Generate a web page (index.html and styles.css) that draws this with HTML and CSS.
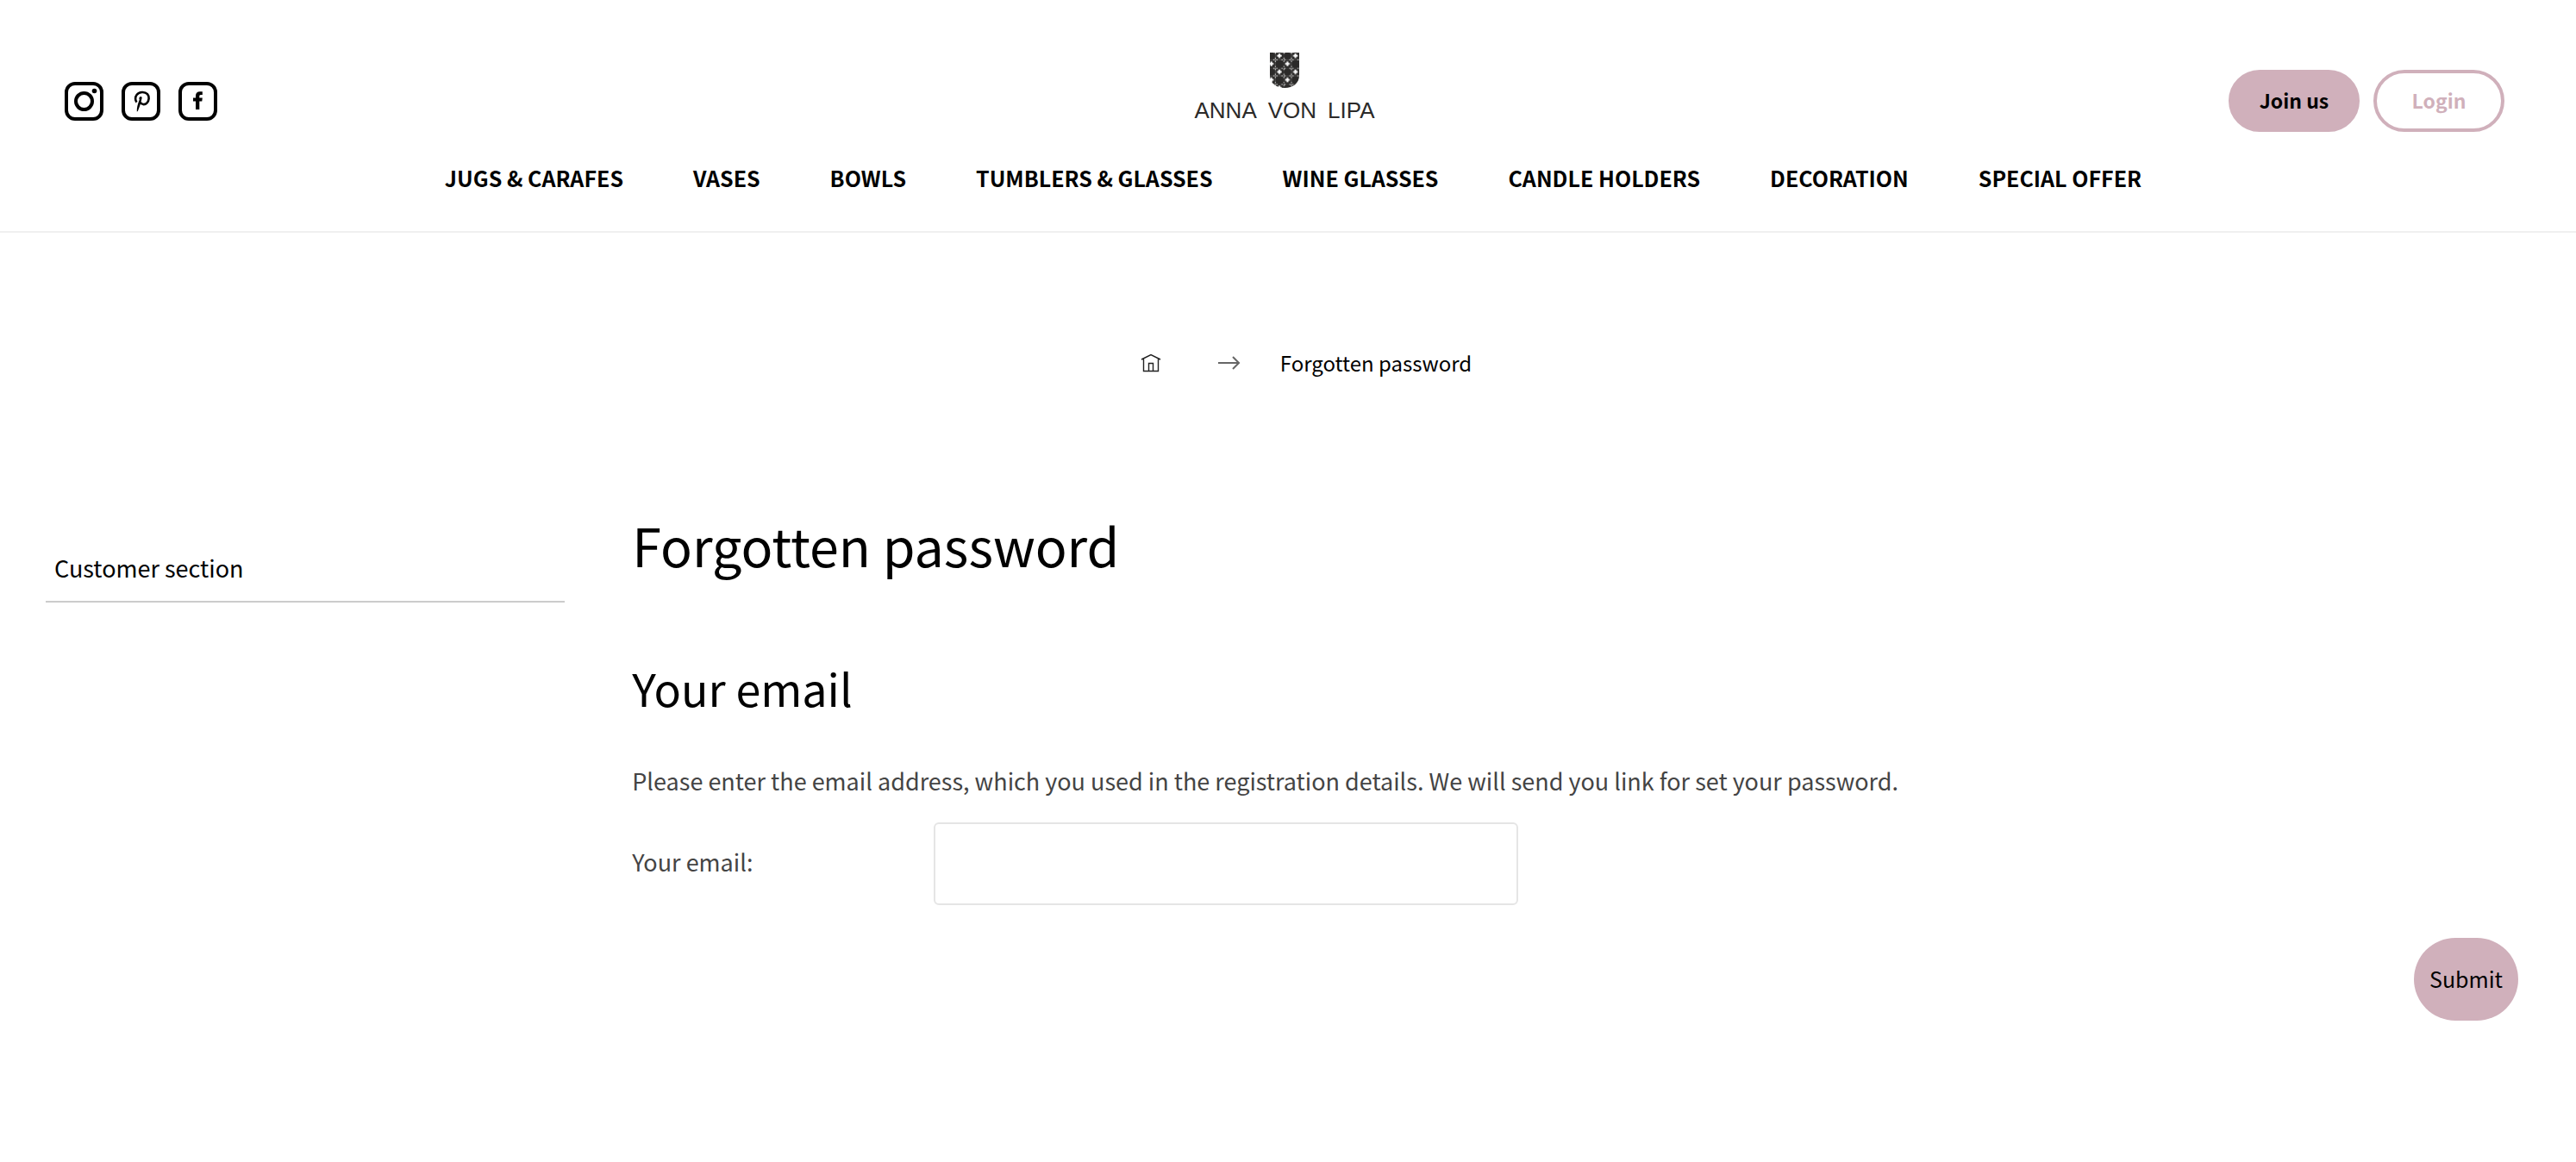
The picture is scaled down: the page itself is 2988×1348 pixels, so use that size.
FILE: index.html
```
<!DOCTYPE html>
<html lang="en">
<head>
    <meta charset="UTF-8">
    <meta name="viewport" content="width=device-width, initial-scale=1">
    <title>Forgotten password | Anna von Lipa</title>
    <link rel="stylesheet" href="styles.css">
</head>
<body>
    <header class="header">
        <div class="header-top">
            <div class="social">
                <a href="#" aria-label="Instagram">
                    <svg viewBox="0 0 45 45">
                        <rect x="2" y="2" width="41" height="41" rx="10" fill="none" stroke="#000" stroke-width="4"/>
                        <circle cx="22.5" cy="22.5" r="9.5" fill="none" stroke="#000" stroke-width="4"/>
                        <circle cx="34.5" cy="10.5" r="2.8"/>
                    </svg>
                </a>
                <a href="#" aria-label="Pinterest">
                    <svg viewBox="0 0 45 45">
                        <rect x="2" y="2" width="41" height="41" rx="10" fill="none" stroke="#000" stroke-width="4"/>
                        <path d="M17.6 23.5C15.6 21.5 15.6 17.5 17.6 15C20.5 11.3 27 11 30 14.2C32.6 17 32 22 29.3 24.6C27 26.8 23 26.6 21.6 23.6" fill="none" stroke="#000" stroke-width="2.6"/>
                        <path d="M21 17.5C22 16.3 24 17 23.6 18.8C22.6 23 21.8 27 18.8 34L17.8 34.6C17.6 30 18.6 26.4 20.8 20.6C20.2 19.6 20.4 18.2 21 17.5Z"/>
                    </svg>
                </a>
                <a href="#" aria-label="Facebook">
                    <svg viewBox="0 0 45 45">
                        <rect x="2" y="2" width="41" height="41" rx="10" fill="none" stroke="#000" stroke-width="4"/>
                        <path d="M20 32V22.6H17V18.4H20V16C20 12.8 21.9 11.2 24.8 11.2H27.8V15H26C24.6 15 24.3 15.7 24.3 16.8V18.4H27.8L27.3 22.6H24.3V32Z"/>
                    </svg>
                </a>
            </div>
            <a href="#" class="logo">
                <svg class="logo-shield" viewBox="0 0 102 123">
                    <defs>
                        <pattern id="glass" x="-9" y="-3" width="56" height="56" patternUnits="userSpaceOnUse">
                            <rect width="56" height="56" fill="#2b2a29"/>
                            <path d="M0 0H56M0 28H56M0 0V56M28 0V56" stroke="#8a8a8a" stroke-width="1"/>
                            <g fill="#fff">
                                <path d="M39 6h6v5h5v6h-5v5h-6v-5h-5v-6h5z"/>
                                <path d="M11 34h6v5h5v6h-5v5h-6v-5h-5v-6h5z"/>
                                <circle cx="28" cy="5" r="2"/>
                                <circle cx="28" cy="23" r="2"/>
                                <circle cx="28" cy="33" r="2"/>
                                <circle cx="28" cy="51" r="2"/>
                                <circle cx="2" cy="5" r="2"/>
                                <circle cx="2" cy="23" r="2"/>
                                <circle cx="2" cy="33" r="2"/>
                                <circle cx="2" cy="51" r="2"/>
                                <circle cx="5" cy="28" r="2"/>
                                <circle cx="23" cy="28" r="2"/>
                                <circle cx="33" cy="28" r="2"/>
                                <circle cx="51" cy="28" r="2"/>
                                <circle cx="5" cy="2" r="2"/>
                                <circle cx="23" cy="2" r="2"/>
                                <circle cx="33" cy="2" r="2"/>
                                <circle cx="51" cy="2" r="2"/>
                            </g>
                        </pattern>
                    </defs>
                    <path d="M0 0H102V80C102 106 80 123 51 123S0 106 0 80Z" fill="url(#glass)"/>
                </svg>
                <span class="logo-text"><span>ANNA</span> <span>VON</span> <span>LIPA</span></span>
            </a>
            <div class="account">
                <a href="#" class="button">Join us</a>
                <a href="#" class="button button-outline">Login</a>
            </div>
        </div>
        <nav class="menu">
            <a href="#">JUGS &amp; CARAFES</a>
            <a href="#">VASES</a>
            <a href="#">BOWLS</a>
            <a href="#">TUMBLERS &amp; GLASSES</a>
            <a href="#">WINE GLASSES</a>
            <a href="#">CANDLE HOLDERS</a>
            <a href="#">DECORATION</a>
            <a href="#">SPECIAL OFFER</a>
        </nav>
    </header>

    <div class="breadcrumb">
        <a href="#" aria-label="Home">
            <svg class="icon-home" viewBox="0 0 24 22" fill="none" stroke="#222" stroke-width="1.4">
                <path d="M1 7L12 1.5L23 7M3.5 6V20.5H20.5V6"/>
                <path d="M9.5 20V11.5H14.5V20"/>
            </svg>
        </a>
        <svg class="icon-arrow" viewBox="0 0 26 16" fill="none" stroke="#666" stroke-width="2">
            <path d="M0 8H24M17 1L24 8L17 15"/>
        </svg>
        <span>Forgotten password</span>
    </div>

    <div class="page">
        <aside class="sidebar">
            <a href="#">Customer section</a>
        </aside>
        <main class="content">
            <h1>Forgotten password</h1>
            <form>
                <h2>Your email</h2>
                <p>Please enter the email address, which you used in the registration details. We will send you link for set your password.</p>
                <div class="field">
                    <label for="email">Your email:</label>
                    <input type="email" id="email" name="email">
                </div>
                <div class="actions">
                    <button type="submit" class="submit">Submit</button>
                </div>
            </form>
        </main>
    </div>
</body>
</html>
```
FILE: styles.css
```
* {
    box-sizing: border-box;
}

body {
    margin: 0;
    background: #fff;
    color: #444;
    font-family: "Noto Sans CJK SC", "Open Sans", sans-serif;
    font-size: 27px;
    line-height: 40px;
}

a {
    color: #000;
    text-decoration: none;
}

svg {
    display: block;
}

.header {
    padding-top: 61px;
    border-bottom: 2px solid #f0f0f0;
}

.header-top {
    display: grid;
    grid-template-columns: 1fr auto 1fr;
    align-items: start;
    padding: 0 83px 0 75px;
}

.social {
    display: flex;
    gap: 21px;
    padding-top: 34px;
}

.social svg {
    width: 45px;
    height: 45px;
}

.logo {
    display: flex;
    flex-direction: column;
    align-items: center;
    gap: 10px;
}

.logo-shield {
    width: 34px;
    height: 41px;
}

.logo-text {
    display: flex;
    gap: 13px;
    color: #2b2a29;
    font-family: "Liberation Sans", Arial, sans-serif;
    font-size: 26px;
    line-height: 32px;
}

.account {
    display: flex;
    justify-content: flex-end;
    gap: 16px;
    padding-top: 20px;
}

.button {
    width: 152px;
    height: 72px;
    border: 4px solid #d0b0bb;
    border-radius: 36px;
    background: #d0b0bb;
    font-size: 23px;
    font-weight: 700;
    line-height: 62px;
    text-align: center;
}

.button-outline {
    background: #fff;
    color: #d0b0bb;
}

.menu {
    display: flex;
    justify-content: center;
    gap: 81px;
    padding: 33px 0 42px 12px;
    font-size: 25px;
    font-weight: 700;
}

.breadcrumb {
    display: flex;
    justify-content: center;
    align-items: center;
    padding: 131px 0 0 42px;
    color: #000;
    font-size: 24px;
}

.icon-home {
    width: 24px;
    height: 22px;
}

.icon-arrow {
    width: 26px;
    height: 16px;
    margin: 0 46px 0 66px;
}

.page {
    display: grid;
    grid-template-columns: 21% 1fr;
    gap: 78px;
    padding: 151px 67px 80px 53px;
}

.sidebar {
    padding-top: 47px;
}

.sidebar a {
    display: block;
    padding: 0 10px 18px;
    border-bottom: 2px solid #ccc;
}

h1,
h2 {
    margin: 0;
    color: #000;
    font-weight: 400;
}

h1 {
    font-size: 61px;
    line-height: 80px;
}

h2 {
    margin-top: 94px;
    font-size: 52px;
    line-height: 64px;
}

p {
    margin: 56px 0 28px;
}

.field {
    display: flex;
    align-items: center;
}

.field label {
    width: 16%;
    padding-bottom: 4px;
}

.field input {
    width: 31%;
    height: 96px;
    padding: 0 20px;
    border: 2px solid #e5e5e5;
    border-radius: 6px;
    font: inherit;
}

.actions {
    display: flex;
    justify-content: flex-end;
    margin-top: 38px;
}

.submit {
    height: 96px;
    padding: 0 18px 2px;
    border: none;
    border-radius: 48px;
    background: #d0b0bb;
    color: #000;
    font: inherit;
    font-size: 25px;
    cursor: pointer;
}
```
